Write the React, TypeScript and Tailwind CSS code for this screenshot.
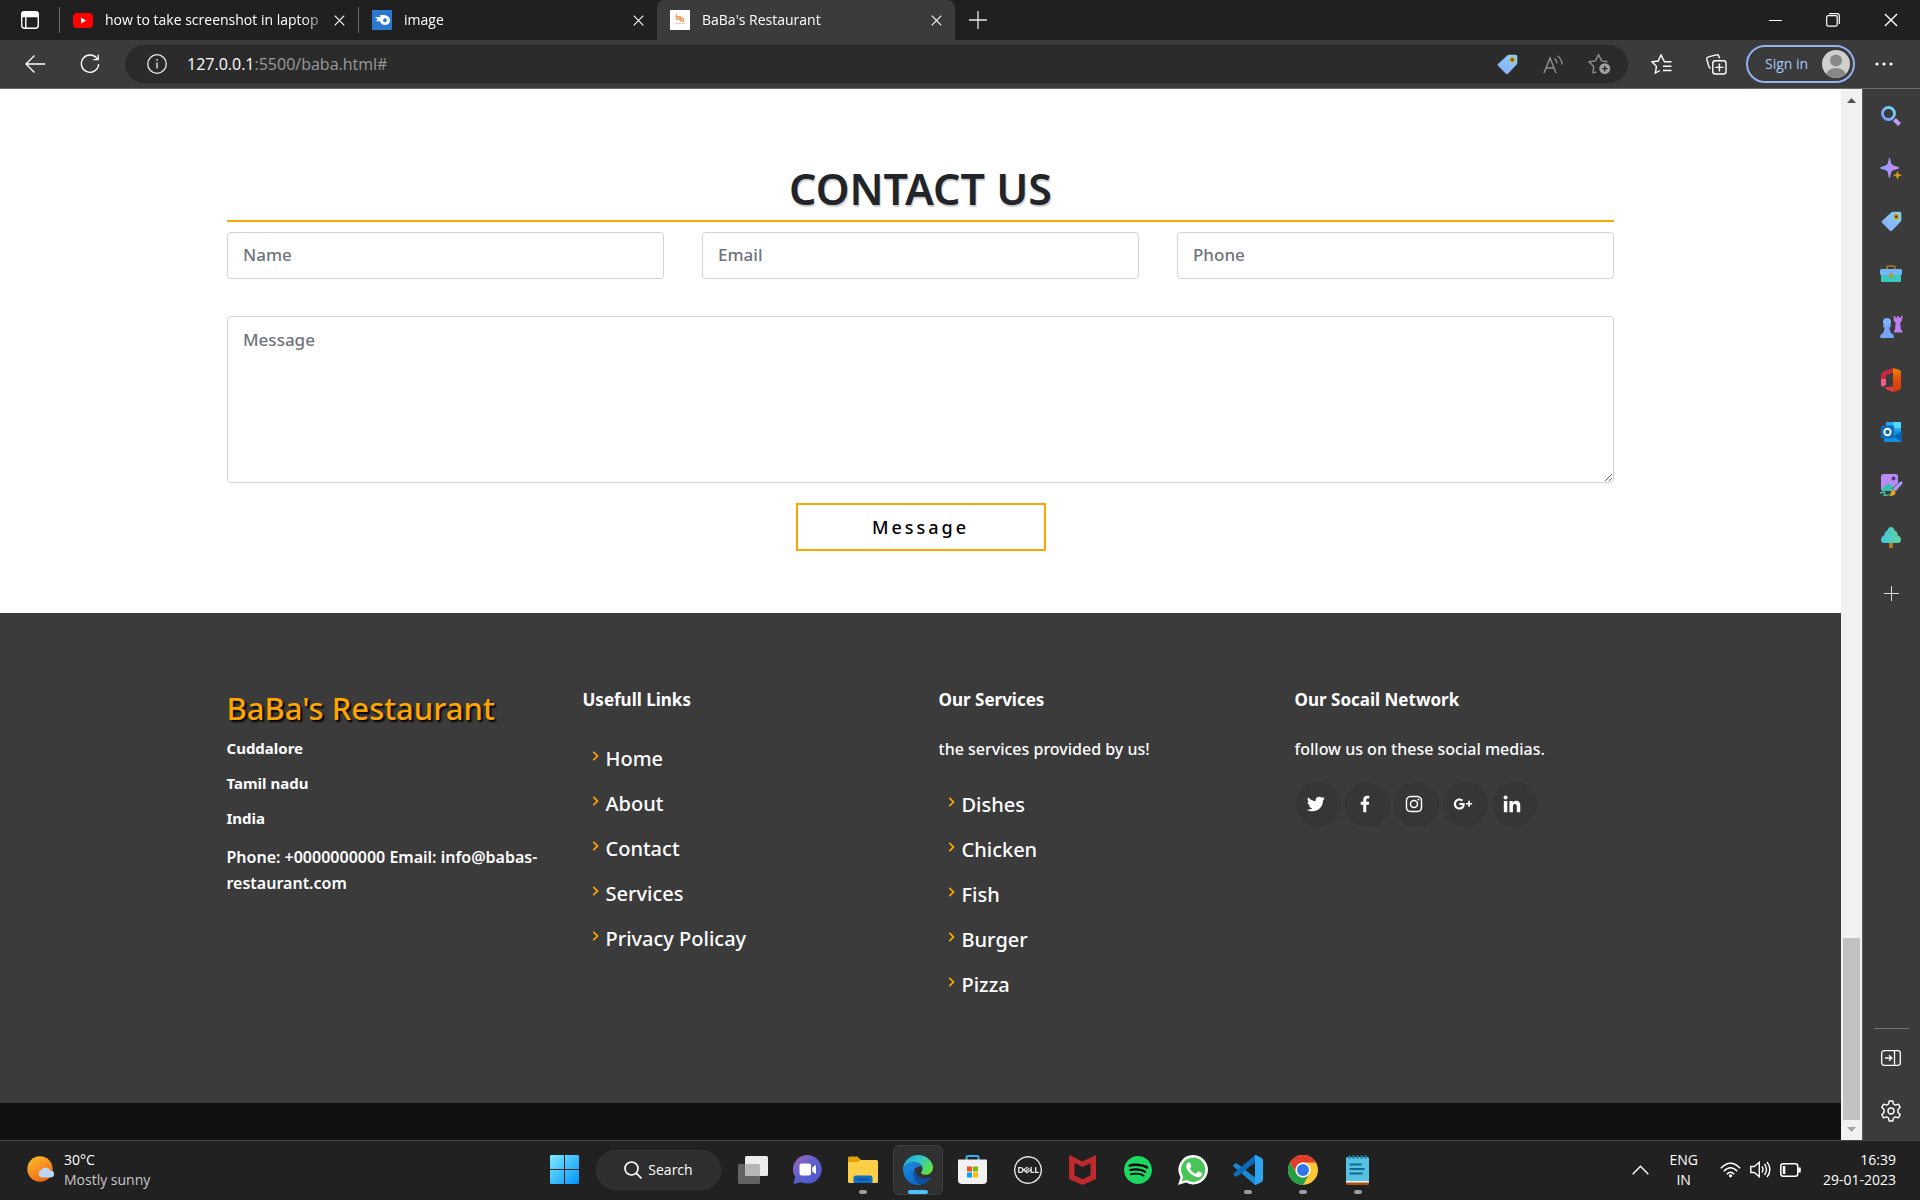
import React from "react";
import {
  BiChevronRight,
  BiLogoTwitter,
  BiLogoFacebook,
  BiLogoInstagram,
  BiLogoGooglePlus,
  BiLogoLinkedin,
} from "react-icons/bi";
import { SiDell, SiSpotify } from "react-icons/si";

type Kids = { children: React.ReactNode };

const CloseIcon = ({ size = 12 }: { size?: number }) => (
  <svg width={size} height={size} viewBox="0 0 12 12" stroke="currentColor" strokeWidth="1.2" fill="none">
    <path d="M.8.8 11.2 11.2M11.2.8.8 11.2" />
  </svg>
);

function Tab({ title, icon, active, width }: { title: string; icon: React.ReactNode; active?: boolean; width: string }) {
  return (
    <div
      className={
        (active ? "rounded-t-lg bg-[#3b3b3b] " : "border-l border-[#5c5c5c] [border-image:linear-gradient(#202020_20%,#6b6b6b_20%,#6b6b6b_80%,#202020_80%)_1] ") +
        "flex h-10 items-center pl-[13px] pr-[7px] " +
        width
      }
    >
      <span className="grid w-5 shrink-0 place-items-center">{icon}</span>
      <span className="ml-3 min-w-0 flex-1 overflow-hidden text-sm leading-5 whitespace-nowrap text-white [mask-image:linear-gradient(to_right,#000_calc(100%-24px),transparent_calc(100%+4px))]">
        {title}
      </span>
      <button aria-label={"Close " + title} className="grid h-6 w-6 shrink-0 place-items-center text-white">
        <CloseIcon size={11} />
      </button>
    </div>
  );
}

function TabStrip() {
  return (
    <header className="flex h-10 bg-[#202020] text-white">
      <button aria-label="Tab actions" className="grid w-[59px] place-items-center">
        <svg width="20" height="20" viewBox="0 0 20 20" fill="none" stroke="#fff" strokeWidth="1.4">
          <rect x="1.7" y="1.7" width="16.6" height="16.6" rx="3" />
          <path d="M1.7 4a2.3 2.3 0 0 1 2.3-2.3h12A2.3 2.3 0 0 1 18.3 4v2.5H1.7z" fill="#fff" />
          <path d="M5.8 6v12" />
        </svg>
      </button>
      <Tab
        width="w-[299px]"
        title="how to take screenshot in laptop"
        icon={
          <svg width="20" height="15" viewBox="0 0 20 15">
            <rect width="20" height="15" rx="4" fill="#f00" />
            <path d="M8 4.500v6l5-3z" fill="#fff" />
          </svg>
        }
      />
      <Tab
        width="w-[299px]"
        title="image"
        icon={
          <svg width="20" height="20" viewBox="0 0 20 20">
            <rect width="20" height="20" fill="#2b78d0" />
            <path
              fillRule="evenodd"
              d="M2.500 7.300 8.700 7.100 7.600 5.400c5-1 10.400.6 10.400 4.800 0 3-2.200 4.700-5 4.700-2.600 0-4.600-1.600-4.800-3.700l-4.400.1 2.200-2zM13 8.300a1.900 1.900 0 1 0 0 3.800 1.900 1.900 0 0 0 0-3.800z"
              fill="#fff"
            />
          </svg>
        }
      />
      <Tab
        active
        width="w-[298px]"
        title="BaBa's Restaurant"
        icon={
          <svg width="20" height="20" viewBox="0 0 20 20" fill="none" stroke="#f79a63" strokeWidth="1.400">
            <rect width="20" height="20" fill="#fff" stroke="none" />
            <path d="M6.500 4v5.500" />
            <circle cx="8.200" cy="8" r="1.500" />
            <path d="M10.600 6v5" />
            <circle cx="12.300" cy="9.700" r="1.500" />
            <path d="M5 13.500h10" strokeWidth="1" stroke="#fbc9ac" />
          </svg>
        }
      />
      <button aria-label="New tab" className="grid w-[46px] place-items-center">
        <svg width="18" height="18" viewBox="0 0 18 18" stroke="#e8e8e8" strokeWidth="1.300">
          <path d="M9 0v18M0 9h18" />
        </svg>
      </button>
      <div className="flex-1" />
      <button aria-label="Minimize" className="grid w-[58px] place-items-center">
        <span className="h-px w-[13px] bg-white" />
      </button>
      <button aria-label="Restore" className="grid w-[58px] place-items-center">
        <svg width="14" height="14" viewBox="0 0 14 14" fill="none" stroke="#fff" strokeWidth="1.200">
          <rect x=".7" y="2.700" width="10.500" height="10.500" rx="1.500" />
          <path d="M3 .7h8a2.300 2.300 0 0 1 2.300 2.300v8" />
        </svg>
      </button>
      <button aria-label="Close window" className="grid w-[58px] place-items-center">
        <CloseIcon size={14} />
      </button>
    </header>
  );
}

function TagIcon({ id, size }: { id: string; size: number }) {
  return (
    <svg width={size} height={size} viewBox="0 0 22 22">
      <defs>
        <linearGradient id={id} x1="1" y1="0" x2="0" y2="1">
          <stop offset="0" stopColor="#7fd4f5" />
          <stop offset="1" stopColor="#8fa8ff" />
        </linearGradient>
      </defs>
      <path d="M12.500.8h6.800a2 2 0 0 1 2 2v6.800a2 2 0 0 1-.6 1.400l-9 9.500a1.800 1.800 0 0 1-2.600 0L1.300 12.700a1.800 1.800 0 0 1 0-2.600l9.700-8.700a2 2 0 0 1 1.500-.6z" fill={`url(#${id})`} />
      <circle cx="16" cy="6" r="3" fill="#e0a013" />
      <circle cx="16" cy="6" r="1.300" fill="#3a2c10" />
    </svg>
  );
}

function Toolbar() {
  return (
    <div className="flex h-12 items-center border-b border-[#6b6b6b] bg-[#3b3b3b] pr-[7px] [box-sizing:content-box]">
      <button aria-label="Back" className="ml-2 grid h-10 w-[54px] place-items-center">
        <svg width="20" height="18" viewBox="0 0 20 18" fill="none" stroke="#fff" strokeWidth="1.400">
          <path d="M20 9H1M9.500.500 1 9l8.500 8.500" />
        </svg>
      </button>
      <button aria-label="Refresh" className="grid h-10 w-[56px] place-items-center">
        <svg width="20" height="20" viewBox="0 0 22 22" fill="none" stroke="#fff" strokeWidth="1.500">
          <path d="M19.200 5.800A9.500 9.500 0 1 0 20.500 11" />
          <path d="M20 .8v5.400h-5.400" />
        </svg>
      </button>
      <div className="ml-[7px] flex h-[38px] flex-1 items-center rounded-full bg-[#2b2b2b] pl-[22px] pr-[6px]">
        <svg width="20" height="20" viewBox="0 0 20 20" fill="none" stroke="#e8e8e8" strokeWidth="1.300">
          <circle cx="10" cy="10" r="9.300" />
          <path d="M10 8.500v6M10 5v1.800" />
        </svg>
        <label htmlFor="address" className="ml-5 text-base text-white">
          127.0.0.1
        </label>
        <input id="address" defaultValue=":5500/baba.html#" className="min-w-0 flex-1 bg-transparent text-base text-[#9a9a9a] outline-none" />
        <button aria-label="Shopping" className="grid w-[46px] place-items-center">
          <TagIcon id="tag-bar" size={21} />
        </button>
        <button aria-label="Read aloud" className="grid w-[46px] place-items-center">
          <svg width="20" height="19" viewBox="0 0 20 19" fill="none" stroke="#8f8f8f" strokeWidth="1.400">
            <path d="M1 18 7 3l6 15M3 13h8M11.500 3.500q2.500 2 2.500 5M14.500 1q4.500 3 4.500 8.500" />
          </svg>
        </button>
        <button aria-label="Add to favorites" className="grid w-[46px] place-items-center">
          <svg width="23" height="22" viewBox="0 0 24 22" fill="none" stroke="#8f8f8f" strokeWidth="1.500">
            <path d="M9 19.500 5.300 20 6 13.500 1.300 8.800l6.300-1L11 1.500l3.300 6.300 6 .8" />
            <circle cx="17.500" cy="15.800" r="5.700" fill="#a0a0a0" stroke="none" />
            <path d="M17.500 12.800v6M14.500 15.800h6" stroke="#2b2b2b" />
          </svg>
        </button>
      </div>
      <button aria-label="Favorites" className="ml-1.5 grid w-[55px] place-items-center">
        <svg width="21" height="20" viewBox="0 0 21 20" fill="none" stroke="#fff" strokeWidth="1.400">
          <path d="M20.500 7.800h-7L10 1 7.200 7 1 7.800l4.500 4.700L4.300 19l4.700-2.500M12 12.300h8.500M12 16.500h8.500" />
        </svg>
      </button>
      <button aria-label="Collections" className="grid w-[55px] place-items-center">
        <svg width="21" height="21" viewBox="0 0 21 21" fill="none" stroke="#fff" strokeWidth="1.400">
          <rect x="6.800" y="6.800" width="13.200" height="13.200" rx="2.500" />
          <path d="M13.400 9.500v8M9.400 13.400h8M4.500 14.500 3 13 .9 5.700a2.300 2.300 0 0 1 1.600-2.800l7.700-2a2.300 2.300 0 0 1 2.800 1.600l.5 1.800" />
        </svg>
      </button>
      <button className="ml-0.5 flex h-[38px] w-[109px] items-center justify-between rounded-full border-2 border-[#8fb2f0] pl-[17px] pr-[3px] text-sm text-[#a9c7fb]">
        Sign in
        <svg width="28" height="28" viewBox="0 0 28 28">
          <defs>
            <clipPath id="avatar">
              <circle cx="14" cy="14" r="14" />
            </clipPath>
          </defs>
          <g clipPath="url(#avatar)">
            <rect width="28" height="28" fill="#d2d0ce" />
            <circle cx="14" cy="10.500" r="6" fill="#8a8886" />
            <ellipse cx="14" cy="26" rx="10" ry="8" fill="#8a8886" />
          </g>
        </svg>
      </button>
      <button aria-label="Settings and more" className="grid w-[58px] place-items-center">
        <svg width="18" height="4" viewBox="0 0 18 4" fill="#fff">
          <circle cx="2" cy="2" r="1.600" />
          <circle cx="9" cy="2" r="1.600" />
          <circle cx="16" cy="2" r="1.600" />
        </svg>
      </button>
    </div>
  );
}

const field =
  "block w-full rounded border border-[#ced4da] bg-white px-[15px] text-[17px] font-medium text-[#212529] placeholder:text-[#6c757d] outline-none";

function Contact() {
  return (
    <section className="bg-white pt-[69px] pb-[62px]">
      <div className="mx-auto max-w-[1423px] px-[18px]">
        <h1 className="mb-2.5 border-b-2 border-[#ffa500] text-center text-[43px] leading-[62px] font-semibold text-[#212529] [text-shadow:1px_2px_1px_rgba(0,0,0,0.2)]">
          CONTACT US
        </h1>
        <form onSubmit={(e) => e.preventDefault()}>
          <div className="grid grid-cols-3 gap-[38px]">
            <input aria-label="Name" placeholder="Name" className={"h-[47px] pb-0.5 " + field} />
            <input aria-label="Email" placeholder="Email" type="email" className={"h-[47px] pb-0.5 " + field} />
            <input aria-label="Phone" placeholder="Phone" type="tel" className={"h-[47px] pb-0.5 " + field} />
          </div>
          <textarea aria-label="Message" placeholder="Message" className={"mt-[37px] h-[167px] resize-y pt-[11px] leading-6 " + field} />
          <button className="mx-auto mt-5 block h-12 w-[250px] border-2 border-[#ffa500] bg-white text-[18px] font-medium tracking-[3px] text-black">
            Message
          </button>
        </form>
      </div>
    </section>
  );
}

function LinkList({ items }: { items: string[] }) {
  return (
    <ul>
      {items.map((t) => (
        <li key={t} className="flex h-[45px] items-center">
          <BiChevronRight className="mr-px mb-1.5 ml-0.5 size-5 text-[#ffa500]" />
          <a href="#" className="text-xl font-medium text-white">
            {t}
          </a>
        </li>
      ))}
    </ul>
  );
}

const Heading = ({ children }: Kids) => <h3 className="text-[17px] leading-6 font-bold">{children}</h3>;

function Footer() {
  const socials: [string, React.ReactNode][] = [
    ["Twitter", <BiLogoTwitter />],
    ["Facebook", <BiLogoFacebook />],
    ["Instagram", <BiLogoInstagram />],
    ["Google Plus", <BiLogoGooglePlus />],
    ["LinkedIn", <BiLogoLinkedin />],
  ];
  return (
    <footer className="flex flex-1 flex-col bg-[#111] text-white">
      <div className="bg-[#3b3b3b] pt-[75px] pb-[96px]">
        <div className="mx-auto grid max-w-[1424px] grid-cols-4">
          <div className="px-[18px]">
            <h2 className="text-[31px] leading-10 font-medium text-[#ffa500] [text-shadow:2px_2px_2px_#000]">BaBa's Restaurant</h2>
            <div className="mt-[3px] text-[15px] leading-[35px] font-bold">
              <p>Cuddalore</p>
              <p>Tamil nadu</p>
              <p>India</p>
            </div>
            <p className="mt-2 text-base leading-[26px] font-semibold">
              Phone: +0000000000 Email: info@babas-restaurant.com
            </p>
          </div>
          <div className="px-[18px]">
            <Heading>Usefull Links</Heading>
            <div className="mt-6">
              <LinkList items={["Home", "About", "Contact", "Services", "Privacy Policay"]} />
            </div>
          </div>
          <div className="px-[18px]">
            <Heading>Our Services</Heading>
            <p className="mt-6 mb-5 text-base leading-[26px] font-medium">the services provided by us!</p>
            <LinkList items={["Dishes", "Chicken", "Fish", "Burger", "Pizza"]} />
          </div>
          <div className="px-[18px]">
            <Heading>Our Socail Network</Heading>
            <p className="mt-6 mb-5 text-base leading-[26px] font-medium">follow us on these social medias.</p>
            <div className="ml-px flex gap-1">
              {socials.map(([name, icon]) => (
                <a key={name} href="#" aria-label={name} className="grid size-[45px] place-items-center rounded-full bg-[#363636] pr-1 pb-0.5 text-[22px]">
                  {icon}
                </a>
              ))}
            </div>
          </div>
        </div>
      </div>
    </footer>
  );
}

function ScrollBar() {
  return (
    <div className="flex w-[21px] flex-col items-center bg-[#f1f1f1]">
      <svg className="mt-[9px]" width="9" height="5" viewBox="0 0 9 5" fill="#505050">
        <path d="M4.500 0 9 5H0z" />
      </svg>
      <div className="flex-1" />
      <div className="h-[182px] w-[17px] bg-[#c1c1c1]" />
      <svg className="mt-[7px] mb-2" width="9" height="5" viewBox="0 0 9 5" fill="#a3a3a3">
        <path d="M4.500 5 9 0H0z" />
      </svg>
    </div>
  );
}

function SideBar() {
  const apps: [string, React.ReactNode][] = [
    [
      "Search",
      <svg width="20" height="20" viewBox="0 0 20 20" fill="none">
        <defs>
          <linearGradient id="lens" x1="1" y1="0" x2="0" y2="1">
            <stop offset="0" stopColor="#6fe0f5" />
            <stop offset="1" stopColor="#7f95ff" />
          </linearGradient>
        </defs>
        <circle cx="7.500" cy="7.500" r="6" stroke="url(#lens)" strokeWidth="2.800" />
        <path d="m13.500 13.500 5 5" stroke="#c39af8" strokeWidth="4" />
      </svg>,
    ],
    [
      "Discover",
      <svg width="22" height="22" viewBox="0 0 22 22">
        <defs>
          <linearGradient id="spark">
            <stop offset="0" stopColor="#8a9bff" />
            <stop offset="1" stopColor="#d08cf7" />
          </linearGradient>
        </defs>
        <path d="M9.500 0c1 0 1.200 5 2.500 6.600C13.500 8.200 19 8.700 19 10s-5.500 1.500-7 3c-1.500 1.800-1.500 7-2.500 7s-1-5.200-2.500-7c-1.500-1.500-7-1.700-7-3s5.500-1.800 7-3.400C8.500 5 8.500 0 9.500 0z" fill="url(#spark)" />
        <path d="M17.500 12.500 18.700 16l3.300 1.200-3.300 1.200-1.200 3.500-1.200-3.500-3.300-1.200 3.300-1.200z" fill="#d99a12" />
      </svg>,
    ],
    ["Shopping", <TagIcon id="tag-side" size={21} />],
    [
      "Tools",
      <svg width="22" height="20" viewBox="0 0 22 20">
        <path d="M7 6V3.500Q7 2 8.500 2h5Q15 2 15 3.500V6" fill="none" stroke="#a87a1c" strokeWidth="1.700" />
        <rect x="1" y="9" width="20" height="9" rx="1" fill="#3cc9bd" />
        <rect x="0" y="5" width="22" height="6" rx="1.500" fill="#74b4f8" />
        <rect x="9.300" y="9" width="3.600" height="4.500" rx="1.500" fill="#c99120" />
      </svg>,
    ],
    [
      "Games",
      <svg width="23" height="24" viewBox="0 0 23 24">
        <path d="M13.500 1h1.800v1.800h1.900V1h1.800v1.800h1.900V1h1.800l-.9 5-1.600 1.400.5 6.600 1.800 2v1.500h-8.500V16l1.200-2 .4-6.600L14 6z" fill="#c07ff0" />
        <circle cx="7" cy="7" r="4" fill="#7fb2f8" />
        <path d="M3.200 10h7.600v2.200H9.500q0 4.500 2.200 6.200 2.300 1 2.300 3 0 1.600-1.300 1.600H1.500Q.2 23 .2 21.400q0-2 2.200-3 2.100-1.700 2.100-6.200H3.200z" fill="#76a5fa" />
      </svg>,
    ],
    [
      "Office",
      <svg width="20" height="24" viewBox="0 0 20 24">
        <defs>
          <linearGradient id="office" x1="0" y1="0" x2="0" y2="1">
            <stop offset="0" stopColor="#e88b00" />
            <stop offset=".5" stopColor="#e0490c" />
            <stop offset="1" stopColor="#d43a10" />
          </linearGradient>
        </defs>
        <path d="M12 0 3 3.300Q0 4.500 0 7.500v9l1.500 2.200 3.500-2V7l7-2z" fill="#c62a3d" />
        <path d="M0 11v6l1.500 1.700 3.500-2V11z" fill="#e8608a" />
        <path d="M12 0l6 1.800q2 .7 2 2.700v15q0 2-2 2.700L12 24z" fill="url(#office)" />
        <path d="M4.500 21q-1-1.500 1-1.800L12 18.500V24z" fill="#e13c46" />
      </svg>,
    ],
    [
      "Outlook",
      <svg width="21" height="20" viewBox="0 0 21 20">
        <rect x="5" y="0" width="15" height="10" rx="1" fill="#28a8ea" />
        <path d="M12.500 0H19q1 0 1 1v5h-7.500z" fill="#50d9ff" />
        <path d="M3 9h18v10q0 1-1 1H4q-1 0-1-1z" fill="#1490df" />
        <path d="m21 9-8.500 5.500L20.500 20q.5-.2.500-1z" fill="#0a63b0" />
        <rect x="0" y="3.500" width="13" height="13" rx="1.200" fill="#0f6cbd" />
        <circle cx="6.500" cy="10" r="3.200" fill="none" stroke="#fff" strokeWidth="1.900" />
      </svg>,
    ],
    [
      "Designer",
      <svg width="23" height="23" viewBox="0 0 23 23">
        <rect x="1" y="0" width="17" height="17" rx="2.500" fill="#b98af5" />
        <path d="m1.500 15 7-6 8 6.500q-.5 1.500-1.500 1.500H3.500q-1.500 0-2-2z" fill="#38bfae" />
        <circle cx="13.500" cy="4.500" r="1.900" fill="#4a3d66" />
        <path d="M22.500 7.500q1 1.500-.5 3l-6.500 7-3-3L19.500 8q1.700-1.500 3-.5z" fill="#a99bfa" stroke="#3b3b3b" strokeWidth=".7" />
        <path d="M9 21.500q1.800-1.500 2.300-4.500 2-2 3.700-.2 1.300 2-.5 4-2 1.800-5.500.7z" fill="#e0a527" />
        <path d="M0 19.500q4-2.500 4.500-1t-.5 2.500q1.500 1 5-.5" fill="none" stroke="#49cfa4" strokeWidth="1.300" />
      </svg>,
    ],
    [
      "Browser essentials",
      <svg width="20" height="21" viewBox="0 0 20 21">
        <defs>
          <linearGradient id="tree">
            <stop offset="0" stopColor="#3cc6e0" />
            <stop offset="1" stopColor="#66d39c" />
          </linearGradient>
        </defs>
        <rect x="8" y="14" width="4" height="7" rx="1" fill="#b9771a" />
        <path d="M10 0q3 0 3.500 3.500Q17 5 16.500 8q3.500 1.500 3.500 5 0 3-3.500 3h-13Q0 16 0 13q0-3.500 3.500-5Q3 5 6.500 3.500 7 0 10 0z" fill="url(#tree)" />
      </svg>,
    ],
  ];
  return (
    <aside className="flex w-[58px] flex-col items-center border-l border-[#5c5c5c] bg-[#3b3b3b] pr-px">
      <div className="mt-px flex h-[474px] w-full flex-col">
        {apps.map(([name, icon]) => (
          <button key={name} aria-label={name} className="grid flex-1 place-items-center">
            {icon}
          </button>
        ))}
      </div>
      <button aria-label="Customize" className="mt-[7px] grid h-11 w-full place-items-center">
        <svg width="15" height="15" viewBox="0 0 15 15" stroke="#dcdcdc" strokeWidth="1">
          <path d="M7.500 0v15M0 7.500h15" />
        </svg>
      </button>
      <div className="flex-1" />
      <div className="h-px w-[35px] bg-[#767676]" />
      <button aria-label="Hide sidebar" className="mt-[3px] grid h-[52px] w-full place-items-center">
        <svg width="20" height="16" viewBox="0 0 20 16" fill="none" stroke="#fff" strokeWidth="1.300">
          <rect x=".7" y=".7" width="18.600" height="14.600" rx="2.500" />
          <path d="M13.500.7v14.600M4 8h6.500M8 5.200 10.800 8 8 10.800" />
        </svg>
      </button>
      <button aria-label="Settings" className="mb-[3px] grid h-[53px] w-full place-items-center">
        <svg width="22" height="22" viewBox="0 0 22 22" fill="none" stroke="#fff" strokeWidth="1.400" strokeLinejoin="round">
          <circle cx="11" cy="11" r="3" />
          <path d="M9.200 1h3.600l.7 3 1.900 1.100 3-.9 1.800 3.100L18 9.600v2.800l2.200 2.300-1.800 3.100-3-.9-1.900 1.100-.7 3H9.200l-.7-3-1.900-1.100-3 .9-1.800-3.100L4 12.400V9.600L1.800 7.300l1.800-3.100 3 .9L8.500 4z" />
        </svg>
      </button>
    </aside>
  );
}

const taskIcons: { name: string; dot?: boolean; active?: boolean; icon: React.ReactNode }[] = [
  {
    name: "Task view",
    icon: (
      <svg width="30" height="28" viewBox="0 0 30 28">
        <rect x="0" y="8" width="22" height="20" rx="1.500" fill="#636363" />
        <rect x="7" y="0" width="23" height="20" rx="1.500" fill="#ececec" />
        <path d="M7 8h13.500q1.500 0 1.500 1.500V20H8.500Q7 20 7 18.500z" fill="#b5b5b5" />
      </svg>
    ),
  },
  {
    name: "Chat",
    icon: (
      <svg width="29" height="29" viewBox="0 0 29 29">
        <defs>
          <linearGradient id="chat" x1="0" y1="0" x2="1" y2="1">
            <stop offset="0" stopColor="#a06bb0" />
            <stop offset=".5" stopColor="#5b5fd0" />
            <stop offset="1" stopColor="#4f55c8" />
          </linearGradient>
        </defs>
        <path d="M14.500 0a14.300 14.300 0 1 1-6.300 27.200L1.500 28.800q-1.300.2-.9-1L2.300 22A14.300 14.300 0 0 1 14.500 0z" fill="url(#chat)" />
        <rect x="6.500" y="8.500" width="11.500" height="12" rx="2" fill="#fff" />
        <path d="m19.300 12.500 3.700-2.700v9.500l-3.700-2.700z" fill="#fff" />
      </svg>
    ),
  },
  {
    name: "File Explorer",
    dot: true,
    icon: (
      <svg width="30" height="27" viewBox="0 0 30 27">
        <path d="M0 2Q0 .5 1.500.5h8L13 4H28v8H0z" fill="#e3a008" />
        <path d="M0 6h9.500L13 4h15.500Q30 4 30 5.500v20q0 1.500-1.500 1.500h-27Q0 27 0 25.500z" fill="#fccf47" />
        <path d="M5.500 27v-5q0-2.500 2.500-2.500h14q2.500 0 2.500 2.500v5z" fill="#0f6fc5" />
        <path d="M9 23.500h12" stroke="#0a4a8c" strokeWidth="1.300" />
      </svg>
    ),
  },
  {
    name: "Microsoft Edge",
    active: true,
    icon: (
      <svg width="30" height="30" viewBox="0 0 30 30">
        <defs>
          <linearGradient id="edge-a" x1="0" y1="0" x2="1" y2=".5">
            <stop offset="0" stopColor="#1f9be0" />
            <stop offset=".5" stopColor="#2fc6cf" />
            <stop offset="1" stopColor="#5fe04a" />
          </linearGradient>
          <linearGradient id="edge-b" x1="0" y1="0" x2=".6" y2="1">
            <stop offset="0" stopColor="#1b8de0" />
            <stop offset="1" stopColor="#0d68c8" />
          </linearGradient>
        </defs>
        <path d="M0 14C.5 6 7 0 15 0c8.500 0 15 6.300 15 12.500 0 4.500-3.500 7.300-7.300 7.300-3.400 0-5-1.300-4.600-2.300.4-1 1.400-1.700 1.400-4C19.500 10 16 7.300 11.500 7.300 6 7.300 2 10 0 14z" fill="url(#edge-a)" />
        <path d="M0 14C2 10 6 7.300 11.500 7.300c4 0 7.300 2.200 7.900 5C16 9.500 10.500 13 10.500 18.500c0 5.500 3.500 9.500 8 11-1 .4-2.300.5-3.500.5C6.500 30 0 23 0 14z" fill="url(#edge-b)" />
        <path d="M12.600 14.500c-1.500 1.500-2.100 3-2.100 4.500 0 5 3.500 9 8 10.500 4-1 7.300-3.500 9.300-6.500.4-.7-.2-1-.8-.7-1.500.8-3.500 1.200-5.300 1.200-5.500 0-9.800-4-9.100-9z" fill="#0f4f9f" />
      </svg>
    ),
  },
  {
    name: "Microsoft Store",
    icon: (
      <svg width="29" height="29" viewBox="0 0 29 29">
        <path d="M8.500 6V2.500q0-1.500 1.500-1.500h9q1.500 0 1.500 1.500V6" fill="none" stroke="#35b0ea" strokeWidth="2" />
        <path d="M0 5.500Q0 4.500 1 4.500h27q1 0 1 1V25q0 4-4 4H4q-4 0-4-4z" fill="#f1f1f1" />
        <rect x="9" y="11.500" width="5" height="5" fill="#f25022" />
        <rect x="15" y="11.500" width="5" height="5" fill="#7fba00" />
        <rect x="9" y="17.500" width="5" height="5" fill="#00a4ef" />
        <rect x="15" y="17.500" width="5" height="5" fill="#ffb900" />
      </svg>
    ),
  },
  { name: "Dell", icon: <SiDell className="size-7 text-[#e4e4e4]" /> },
  {
    name: "McAfee",
    icon: (
      <svg width="27" height="30" viewBox="0 0 27 30">
        <path d="M0 0l13.500 6.500L27 0v24l-13.500 6L0 24zM5.500 8v12.500l8 3.700 8-3.700V8l-8 4z" fill="#c12a2d" fillRule="evenodd" />
      </svg>
    ),
  },
  {
    name: "Spotify",
    icon: (
      <span className="grid place-items-center rounded-full bg-black">
        <SiSpotify className="size-7 text-[#1ed760]" />
      </span>
    ),
  },
  {
    name: "WhatsApp",
    icon: (
      <svg width="30" height="30" viewBox="0 0 30 30">
        <path d="M15.200 0A14.700 14.700 0 1 1 8 27.500L0 30l2.500-7.800A14.700 14.700 0 0 1 15.200 0z" fill="#fff" />
        <path d="M15.200 2.500a12.200 12.200 0 1 1-6.500 22.600L3.700 26.500l1.500-4.900A12.200 12.200 0 0 1 15.200 2.500z" fill="#48c556" />
        <path d="M10.300 7.500c.8-.4 1.500-.2 1.800.6l1.200 2.800c.2.600 0 1-.5 1.500-.8.900-1 1-.5 1.900 1.200 2 2.700 3.200 4.900 4.200.7.300 1 .2 1.500-.4l1-1.200c.4-.5.8-.5 1.400-.3l2.600 1.300c.6.3.7.6.6 1.200-.4 2-2 3.200-4.100 3.100-5.500-.5-11.700-6.500-12-10.800 0-1.700.8-3.100 2.100-3.900z" fill="#fff" />
      </svg>
    ),
  },
  {
    name: "Visual Studio Code",
    dot: true,
    icon: (
      <svg width="30" height="30" viewBox="0 0 30 30">
        <path d="M22 22.500 4 8.500q-.8-.6-1.500 0L.5 10q-.8.800 0 1.600L21.500 29.500 24 28z" fill="#1a8ad4" />
        <path d="M22 7.500 4 21.500q-.8.600-1.500 0L.5 20q-.8-.8 0-1.600L21.500.5 24 2z" fill="#0b6bb5" />
        <path d="M21.500.3q.8-.5 1.700 0l5.500 2.700q1.300.7 1.300 2.200v19.600q0 1.500-1.300 2.200l-5.500 2.700q-.9.500-1.700 0 .5-.3.500-1.200v-27q0-.9-.5-1.200z" fill="#2aa5f2" />
      </svg>
    ),
  },
  {
    name: "Google Chrome",
    dot: true,
    icon: (
      <svg width="30" height="30" viewBox="0 0 30 30">
        <circle cx="15" cy="15" r="15" fill="#fcc934" />
        <path d="M2 7.500A15 15 0 0 1 28 7.500H15a7.500 7.500 0 0 0-6.500 11.250z" fill="#e33b2e" />
        <path d="M2 7.500A15 15 0 0 0 15 30l6.500-11.250a7.500 7.500 0 0 1-13 0z" fill="#24a148" />
        <circle cx="15" cy="15" r="7.500" fill="#fff" />
        <circle cx="15" cy="15" r="6" fill="#3177e8" />
      </svg>
    ),
  },
  {
    name: "Notepad",
    dot: true,
    icon: (
      <svg width="23" height="30" viewBox="0 0 23 30">
        <rect x="0" y="25" width="23" height="5" rx="1.500" fill="#a8520f" />
        <path d="M0 26h23v1.500H0z" fill="#f2f2f2" />
        <path d="M0 3.500Q0 2 1.500 2h20Q23 2 23 3.500V26H0z" fill="#55c2e4" />
        <path d="M3.500 0v4M7.500 0v4M11.500 0v4M15.500 0v4M19.500 0v4" stroke="#1b7ea6" strokeWidth="1.800" />
        <path d="M3.500 9.500h12M3.500 14h15M3.500 18.500h13" stroke="#11678c" strokeWidth="2" />
      </svg>
    ),
  },
];

function Taskbar() {
  return (
    <nav className="grid h-[60px] grid-cols-[1fr_auto_1fr] items-center border-t border-[#474747] bg-[#212122] pb-0.5 text-sm leading-5 text-white">
      <button className="flex items-center gap-[9px] pl-[27px] text-left">
        <svg width="28" height="28" viewBox="0 0 28 28">
          <defs>
            <linearGradient id="sun" x1="0" y1="0" x2=".6" y2="1">
              <stop offset="0" stopColor="#fbc02d" />
              <stop offset="1" stopColor="#f26a14" />
            </linearGradient>
          </defs>
          <circle cx="13" cy="13" r="12.700" fill="url(#sun)" />
          <path d="M14.500 21.500a4 4 0 0 1-.5-7.500 5 5 0 0 1 9 .5 3.500 3.500 0 0 1 1 7z" fill="#bcd5fb" />
        </svg>
        <span className="flex flex-col">
          <span>30°C</span>
          <span className="text-[#c8c8c8]">Mostly sunny</span>
        </span>
      </button>
      <div className="flex h-full items-center pl-0.5">
        <button aria-label="Start" className="grid w-[55px] place-items-center">
          <svg width="29" height="29" viewBox="0 0 29 29">
            <defs>
              <linearGradient id="win" x1="0" y1="0" x2="1" y2="1">
                <stop offset="0" stopColor="#7eeaff" />
                <stop offset="1" stopColor="#0093fb" />
              </linearGradient>
            </defs>
            <path d="M1 0h13v14H0V1q0-1 1-1zM15 0h13q1 0 1 1v13H15zM0 15h14v14H1q-1 0-1-1zM15 15h14v13q0 1-1 1H15z" fill="url(#win)" />
          </svg>
        </button>
        <button className="mx-1 flex h-10 w-[125px] items-center justify-center gap-1.5 rounded-full border border-[#353535] bg-[#2e2e2e]">
          <svg width="18" height="18" viewBox="0 0 18 18" fill="none" stroke="#fff" strokeWidth="1.700">
            <circle cx="7.500" cy="7.500" r="6.500" />
            <path d="m12.200 12.200 5.300 5.300" />
          </svg>
          Search
        </button>
        {taskIcons.map(({ name, icon, dot, active }) => (
          <button key={name} aria-label={name} className="relative grid h-full w-[55px] place-items-center">
            <span className={(active ? "border border-[#3f3f3f] bg-[#303030] " : "") + "grid size-[50px] place-items-center rounded-md"}>{icon}</span>
            {active && <span className="absolute bottom-1 left-1/2 h-1 w-5 -translate-x-1/2 rounded-full bg-[#4cc2ff]" />}
            {dot && <span className="absolute bottom-1 left-1/2 h-1 w-2 -translate-x-1/2 rounded-full bg-[#9c9c9c]" />}
          </button>
        ))}
      </div>
      <div className="flex items-center justify-end pr-6">
        <button aria-label="Show hidden icons" className="mr-5">
          <svg width="17" height="10" viewBox="0 0 17 10" fill="none" stroke="#fff" strokeWidth="1.400">
            <path d="M.7 9.200 8.500 1.200l7.800 8" />
          </svg>
        </button>
        <button className="mr-[22px] flex flex-col items-center">
          <span>ENG</span>
          <span>IN</span>
        </button>
        <button aria-label="Network, volume and battery" className="mr-[22px] flex items-center gap-[9px]">
          <svg width="21" height="16" viewBox="0 0 21 16" fill="none" stroke="#fff" strokeWidth="1.500">
            <path d="M.8 6.200q9.700-10 19.400 0M3.800 9.200q6.700-7 13.400 0M6.800 12.200q3.700-4 7.400 0" />
            <circle cx="10.500" cy="13.800" r="1.600" fill="#fff" stroke="none" />
          </svg>
          <svg width="21" height="17" viewBox="0 0 21 17" fill="none" stroke="#fff" strokeWidth="1.400">
            <path d="M.8 5.500v6h3.500l5 4.200V1.300l-5 4.200zM12 5.500q2 3 0 6M14.500 3q4 5.500 0 11M17 .8q5.800 7.700 0 15.400" />
          </svg>
          <svg width="21" height="14" viewBox="0 0 21 14" fill="none" stroke="#fff" strokeWidth="1.500">
            <rect x=".8" y=".8" width="17" height="12.400" rx="2.500" />
            <rect x="2.800" y="3" width="2.500" height="8" fill="#fff" stroke="none" />
            <path d="M19.500 4.500v5" strokeWidth="2.500" />
          </svg>
        </button>
        <button className="flex flex-col items-end">
          <span>16:39</span>
          <span>29-01-2023</span>
        </button>
      </div>
    </nav>
  );
}

export default function App() {
  return (
    <div className="flex min-h-screen flex-col bg-[#3b3b3b] font-['Open_Sans','Noto_Sans',sans-serif]">
      <TabStrip />
      <Toolbar />
      <div className="flex flex-1">
        <main className="flex min-w-0 flex-1 flex-col font-['Noto_Sans','Open_Sans',sans-serif]">
          <Contact />
          <Footer />
        </main>
        <ScrollBar />
        <SideBar />
      </div>
      <Taskbar />
    </div>
  );
}
